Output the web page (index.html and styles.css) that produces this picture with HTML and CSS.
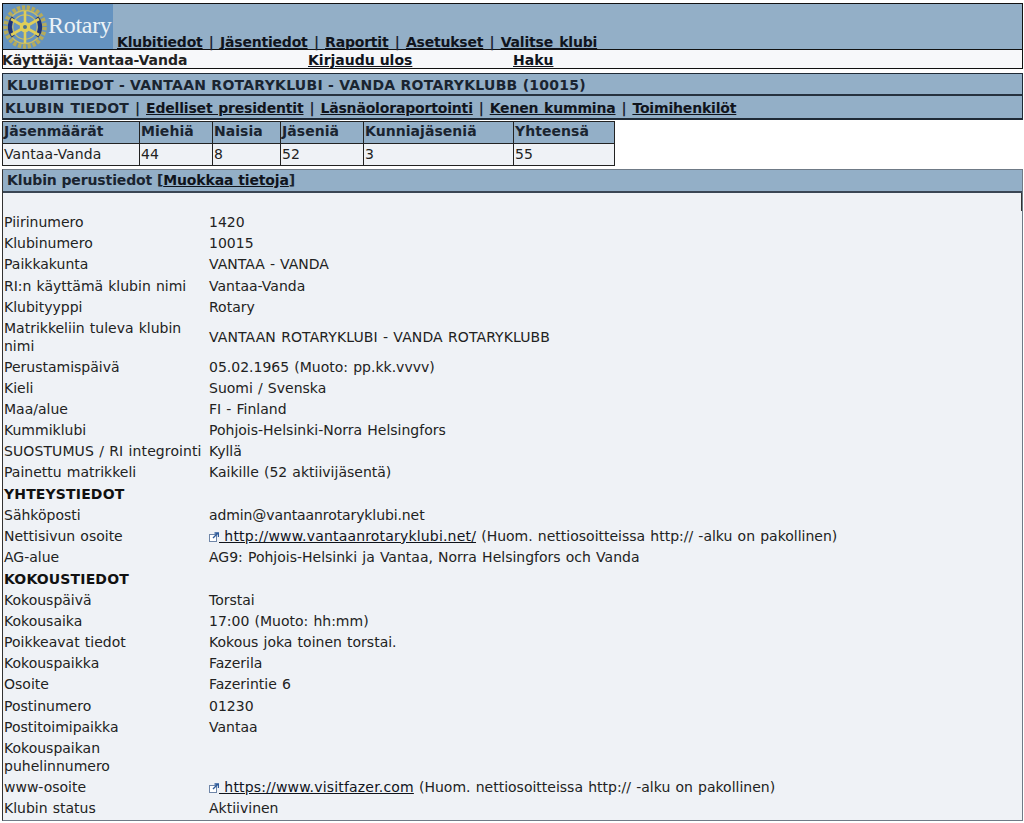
FILE: index.html
```html
<!DOCTYPE html>
<html lang="fi">
<head>
<meta charset="utf-8">
<title>Klubitiedot</title>
<link rel="stylesheet" href="styles.css">
</head>
<body>
<header class="top-box">
  <div class="top-bar">
    <div class="logo">
      <svg class="wheel" viewBox="0 0 44 44" width="44" height="44" aria-hidden="true">
        <circle cx="22" cy="22" r="19.5" fill="none" stroke="#b5ab5c" stroke-width="4.5" stroke-dasharray="3.2 1.7"/>
        <circle cx="22" cy="22" r="16.5" fill="none" stroke="#c9bd62" stroke-width="1.4"/>
        <circle cx="22" cy="22" r="12.2" fill="none" stroke="#c9bd62" stroke-width="1.2"/>
        <path d="M10.3 12.6 A14.5 14.5 0 0 0 10.3 31.4 M33.7 12.6 A14.5 14.5 0 0 1 33.7 31.4" fill="none" stroke="#1f3478" stroke-width="4"/>
        <g stroke="#e0ce58" stroke-width="2.6">
          <line x1="22" y1="6" x2="22" y2="38"/>
          <line x1="8.1" y1="14" x2="35.9" y2="30"/>
          <line x1="8.1" y1="30" x2="35.9" y2="14"/>
        </g>
        <circle cx="22" cy="22" r="5.2" fill="#e0ce58"/>
        <circle cx="22" cy="22" r="2" fill="#4a7396"/>
      </svg>
      <span class="logo-text">Rotary</span>
    </div>
    <nav class="main-nav">
      <a href="#">Klubitiedot</a> | <a href="#">Jäsentiedot</a> | <a href="#">Raportit</a> | <a href="#">Asetukset</a> | <a href="#">Valitse klubi</a>
    </nav>
  </div>
  <div class="user-row">
    <span class="user-name">Käyttäjä: Vantaa-Vanda</span>
    <a class="user-logout" href="#">Kirjaudu ulos</a>
    <a href="#">Haku</a>
  </div>
</header>

<section class="title-box">
  <h1 class="title-bar">KLUBITIEDOT - VANTAAN ROTARYKLUBI - VANDA ROTARYKLUBB (10015)</h1>
  <nav class="sub-nav"><span class="sub-current">KLUBIN TIEDOT</span> | <a href="#">Edelliset presidentit</a> | <a href="#">Läsnäoloraportointi</a> | <a href="#">Kenen kummina</a> | <a href="#">Toimihenkilöt</a></nav>
</section>

<table class="counts">
  <colgroup>
    <col class="c1"><col class="c2"><col class="c3"><col class="c4"><col class="c5"><col class="c6">
  </colgroup>
  <tr><th>Jäsenmäärät</th><th>Miehiä</th><th>Naisia</th><th>Jäseniä</th><th>Kunniajäseniä</th><th>Yhteensä</th></tr>
  <tr><td>Vantaa-Vanda</td><td>44</td><td>8</td><td>52</td><td>3</td><td>55</td></tr>
</table>

<section class="panel">
  <h2 class="panel-head">Klubin perustiedot [<a href="#">Muokkaa tietoja</a>]</h2>
  <div class="panel-spacer"></div>
  <table class="info">
    <tr><td>Piirinumero</td><td>1420</td></tr>
    <tr><td>Klubinumero</td><td>10015</td></tr>
    <tr class="tall"><td>Paikkakunta</td><td>VANTAA - VANDA</td></tr>
    <tr><td>RI:n käyttämä klubin nimi</td><td>Vantaa-Vanda</td></tr>
    <tr><td>Klubityyppi</td><td>Rotary</td></tr>
    <tr><td>Matrikkeliin tuleva klubin nimi</td><td class="caps">VANTAAN ROTARYKLUBI - VANDA ROTARYKLUBB</td></tr>
    <tr><td>Perustamispäivä</td><td>05.02.1965 (Muoto: pp.kk.vvvv)</td></tr>
    <tr><td>Kieli</td><td>Suomi / Svenska</td></tr>
    <tr><td>Maa/alue</td><td>FI - Finland</td></tr>
    <tr><td>Kummiklubi</td><td>Pohjois-Helsinki-Norra Helsingfors</td></tr>
    <tr><td class="caps">SUOSTUMUS / RI integrointi</td><td>Kyllä</td></tr>
    <tr class="tall"><td>Painettu matrikkeli</td><td>Kaikille (52 aktiivijäsentä)</td></tr>
    <tr><th colspan="2">YHTEYSTIEDOT</th></tr>
    <tr><td>Sähköposti</td><td class="tight">admin@vantaanrotaryklubi.net</td></tr>
    <tr><td>Nettisivun osoite</td><td><a class="ext" href="#"><svg class="ext-icon" viewBox="0 0 10 10" width="10" height="10" aria-hidden="true"><rect x="0.5" y="2.5" width="7" height="7" fill="#fff" stroke="#6f86a8"/><path d="M4 6 L9 1 M5.5 1 H9.5 V5" fill="none" stroke="#2d5a9a" stroke-width="1.4"/></svg> http://www.vantaanrotaryklubi.net/</a> (Huom. nettiosoitteissa http:// -alku on pakollinen)</td></tr>
    <tr class="tall"><td>AG-alue</td><td>AG9: Pohjois-Helsinki ja Vantaa, Norra Helsingfors och Vanda</td></tr>
    <tr><th colspan="2">KOKOUSTIEDOT</th></tr>
    <tr><td>Kokouspäivä</td><td>Torstai</td></tr>
    <tr><td>Kokousaika</td><td>17:00 (Muoto: hh:mm)</td></tr>
    <tr><td>Poikkeavat tiedot</td><td>Kokous joka toinen torstai.</td></tr>
    <tr><td>Kokouspaikka</td><td>Fazerila</td></tr>
    <tr class="tall"><td>Osoite</td><td>Fazerintie 6</td></tr>
    <tr><td>Postinumero</td><td>01230</td></tr>
    <tr><td>Postitoimipaikka</td><td>Vantaa</td></tr>
    <tr><td>Kokouspaikan puhelinnumero</td><td></td></tr>
    <tr><td>www-osoite</td><td><a class="ext" href="#"><svg class="ext-icon" viewBox="0 0 10 10" width="10" height="10" aria-hidden="true"><rect x="0.5" y="2.5" width="7" height="7" fill="#fff" stroke="#6f86a8"/><path d="M4 6 L9 1 M5.5 1 H9.5 V5" fill="none" stroke="#2d5a9a" stroke-width="1.4"/></svg> https://www.visitfazer.com</a> (Huom. nettiosoitteissa http:// -alku on pakollinen)</td></tr>
    <tr><td>Klubin status</td><td>Aktiivinen</td></tr>
  </table>
</section>
</body>
</html>
```
FILE: styles.css
```css
* { box-sizing: border-box; }
html, body { margin: 0; padding: 0; background: #fff; }
body {
  width: 1024px;
  height: 823px;
  overflow: hidden;
  padding: 3px 1px 0 2px;
  font-family: "DejaVu Sans", Verdana, sans-serif;
  font-size: 14px;
  line-height: 17px;
  color: #222;
}
a { color: #10141c; text-decoration: underline; }

.top-box { border: 1px solid #111; }
.top-bar {
  display: flex;
  align-items: flex-end;
  height: 46px;
  background: #93afc7;
  border-bottom: 1px solid #111;
  font-weight: bold;
}
.logo {
  display: flex;
  align-items: center;
  align-self: flex-start;
  width: 110px;
  height: 45px;
  background: #6593c0;
  color: #edf3f8;
}
.wheel { flex: none; }
.logo-text {
  font-family: "Liberation Serif", "Times New Roman", serif;
  font-size: 24px;
  line-height: 30px;
  margin: -3px 0 0 1px;
  font-weight: normal;
  letter-spacing: -0.3px;
}
.main-nav {
  margin: 0 0 -2px 4px;
  line-height: 18px;
  color: #1c2533;
  white-space: nowrap;
  letter-spacing: -0.2px;
  word-spacing: 1.6px;
}
.user-row {
  display: flex;
  height: 18px;
  padding-top: 2px;
  line-height: 16px;
  background: #f7f8fa;
  font-weight: bold;
  white-space: nowrap;
}
.user-name { width: 305px; text-indent: -1px; }
.user-logout { width: 205px; }

.title-box { margin-top: 4px; border: 1px solid #1f2a36; border-bottom: 2px solid #1f2a36; }
.title-bar {
  margin: 0;
  height: 22px;
  padding: 2px 0 0 4px;
  background: #93afc7;
  font-size: 14px;
  line-height: 18px;
  font-weight: bold;
  letter-spacing: 0.26px;
  color: #1a2430;
  border-bottom: 2px solid #26323f;
}
.sub-nav {
  height: 22px;
  padding: 3px 0 0 2px;
  background: #93afc7;
  font-weight: bold;
  line-height: 18px;
  color: #1a2430;
  white-space: nowrap;
  word-spacing: 1px;
}
.sub-nav a { letter-spacing: -0.17px; }
.sub-current { letter-spacing: 0.2px; }

.counts {
  border-collapse: collapse;
  table-layout: fixed;
  width: 612px;
  margin-top: 1px;
}
.c1 { width: 137px; } .c2 { width: 73px; } .c3 { width: 68px; }
.c4 { width: 83px; } .c5 { width: 150px; } .c6 { width: 101px; }
.counts th, .counts td {
  border: 1px solid #222;
  height: 22px;
  padding: 0 1px;
  text-align: left;
  line-height: 18px;
  vertical-align: top;
}
.counts th { background: #93afc7; color: #1a2430; font-weight: bold; letter-spacing: 0.05px; }
.counts td { background: #eff2f6; letter-spacing: 0.1px; padding-top: 1px; }

.panel {
  margin-top: 3px;
  height: 652px;
  background: #eff2f6;
  border: 1px solid #6f7a86;
  border-left-color: #333;
}
.panel-head {
  margin: 0;
  height: 23px;
  padding: 1px 0 0 4px;
  background: #93afc7;
  border-bottom: 2px solid #3a4654;
  font-size: 14px;
  line-height: 18px;
  font-weight: bold;
  letter-spacing: -0.12px;
  color: #1a2430;
}
.panel-spacer { height: 18px; border-right: 1px solid #333; }
.info {
  border-collapse: collapse;
  width: 100%;
  table-layout: fixed;
  word-spacing: 0.7px;
}
.info td, .info th {
  padding: 1.5px 1px;
  height: 21px;
  line-height: 18px;
  vertical-align: middle;
  text-align: left;
}
.info .tall td { height: 22px; padding: 2px 1px; }
.info td:first-child { width: 205px; padding-right: 0; }
.info th { font-weight: bold; color: #111; letter-spacing: 0.15px; }
.info .caps { letter-spacing: 0.1px; }
.info .tight { letter-spacing: -0.1px; }
.ext { white-space: pre; letter-spacing: 0.18px; }
.ext-icon { vertical-align: -1px; }
```
